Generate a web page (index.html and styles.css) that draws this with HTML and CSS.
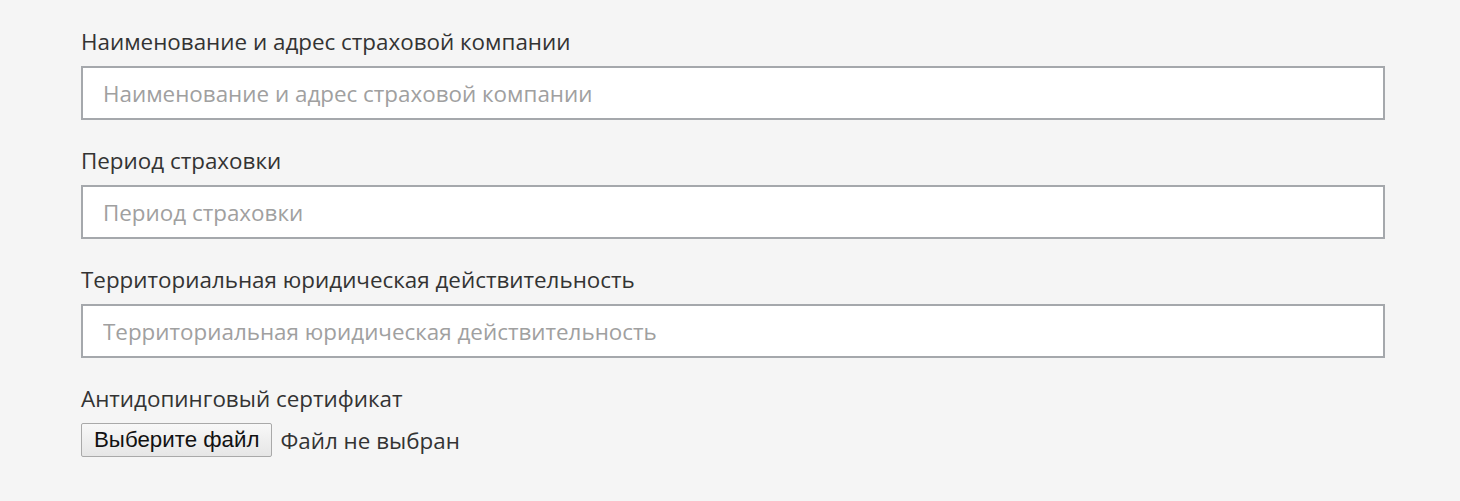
FILE: index.html
```html
<!DOCTYPE html>
<html lang="ru">
<head>
    <meta charset="UTF-8">
    <meta name="viewport" content="width=device-width, initial-scale=1.0">
    <title>Страховка</title>
    <link rel="stylesheet" href="styles.css">
</head>
<body>
    <form class="insurance-form">
        <div class="form-group">
            <label class="form-label" for="company">Наименование и адрес страховой компании</label>
            <input class="form-input" type="text" id="company" placeholder="Наименование и адрес страховой компании">
        </div>
        <div class="form-group">
            <label class="form-label" for="period">Период страховки</label>
            <input class="form-input" type="text" id="period" placeholder="Период страховки">
        </div>
        <div class="form-group">
            <label class="form-label" for="territory">Территориальная юридическая действительность</label>
            <input class="form-input" type="text" id="territory" placeholder="Территориальная юридическая действительность">
        </div>
        <div class="form-group">
            <span class="form-label">Антидопинговый сертификат</span>
            <div class="file-field">
                <label class="file-button" for="certificate">Выберите файл</label>
                <span class="file-status">Файл не выбран</span>
                <input class="file-hidden" type="file" id="certificate">
            </div>
        </div>
    </form>
</body>
</html>
```

FILE: styles.css
```css
body {
    font-family: 'Open Sans', 'Noto Sans', sans-serif;
    margin: 0;
    padding: 0;
    background-color: #f5f5f5;
    color: #333;
}

.insurance-form {
    width: 1304px;
    margin-left: 81px;
    padding-top: 28px;
}

.form-group {
    display: flex;
    flex-direction: column;
    margin-bottom: 27px;
}

.form-label {
    font-size: 22.4px;
    line-height: 28px;
    margin-bottom: 10px;
    color: #333;
}

.form-input {
    box-sizing: border-box;
    height: 54px;
    width: 100%;
    padding: 0 20px;
    border: 2px solid #a5a8ac;
    background-color: #fff;
    font-family: 'Open Sans', 'Noto Sans', sans-serif;
    font-size: 22.4px;
    color: #333;
    outline: none;
}

.form-input::placeholder {
    color: #a0a0a0;
}

.file-field {
    display: flex;
    align-items: center;
    gap: 8px;
}

.file-button {
    box-sizing: border-box;
    height: 34px;
    padding: 0 12px;
    display: flex;
    align-items: center;
    border: 1px solid #a9a9a9;
    border-radius: 2px;
    background: linear-gradient(#f8f8f8, #e6e6e6);
    font-family: 'Liberation Sans', Arial, sans-serif;
    font-size: 22.3px;
    color: #111;
    cursor: pointer;
}

.file-status {
    font-size: 22.4px;
    color: #333;
}

.file-hidden {
    display: none;
}
```
